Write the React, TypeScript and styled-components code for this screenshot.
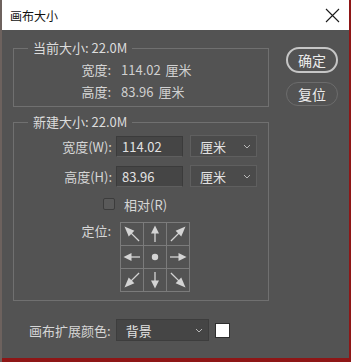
import React from 'react'
import styled, { createGlobalStyle } from 'styled-components'

const GlobalStyle = createGlobalStyle`
    html, body {
        margin: 0;
        padding: 0;
        width: 351px;
        height: 362px;
        overflow: hidden;
        background: linear-gradient(90deg, #6d625e 0 2px, #8e1616 2px);
        font-family: "Noto Sans CJK SC", "Noto Sans", sans-serif;
    }
`;

type Dir = 'nw' | 'n' | 'ne' | 'w' | 'c' | 'e' | 'sw' | 's' | 'se';

const angles: Record<Dir, number> = {
    n: 0, ne: 45, e: 90, se: 135, s: 180, sw: 225, w: 270, nw: 315, c: 0,
};

const Arrow = ({ dir }: { dir: Dir }) => {
    if (dir === 'c') {
        return (
            <svg width="22" height="22" viewBox="0 0 22 22">
                <circle cx="11" cy="11" r="3.2" fill="#d4d4d4" />
            </svg>
        );
    }
    const diag = angles[dir] % 90 !== 0;
    const len = diag ? 1.25 : 1;
    return (
        <svg width="22" height="22" viewBox="0 0 22 22">
            <g transform={`rotate(${angles[dir]} 11 11) translate(11 11) scale(1 ${len}) translate(-11 -11)`}>
                <line x1="11" y1="19" x2="11" y2="8" stroke="#d4d4d4" strokeWidth="1.3" />
                <polygon points="11,2.5 7,10.5 15,10.5" fill="#d4d4d4" />
            </g>
        </svg>
    );
};

const Chevron = () => (
    <svg width="8" height="5" viewBox="0 0 8 5">
        <path d="M1 1 L4 4 L7 1" fill="none" stroke="#b8b8b8" strokeWidth="1" />
    </svg>
);

const App = () => {
    const dirs: Dir[] = ['nw', 'n', 'ne', 'w', 'c', 'e', 'sw', 's', 'se'];
    return (
        <>
            <GlobalStyle />
            <Dialog>
                <TitleBar>
                    <Title>画布大小</Title>
                    <svg width="15" height="15" viewBox="0 0 15 15">
                        <path d="M1 1 L14 14 M14 1 L1 14" stroke="#1a1a1a" strokeWidth="1.1" />
                    </svg>
                </TitleBar>
                <Body>
                    <Groups>
                        <Group>
                            <Legend>当前大小: 22.0M</Legend>
                            <InfoRow>
                                <Label>宽度:</Label>
                                <Value>114.02 厘米</Value>
                            </InfoRow>
                            <InfoRow>
                                <Label>高度:</Label>
                                <Value>83.96 厘米</Value>
                            </InfoRow>
                        </Group>
                        <Group $second>
                            <Legend>新建大小: 22.0M</Legend>
                            <FieldRow>
                                <Label>宽度(W):</Label>
                                <Input>114.02</Input>
                                <Select $w={67}>厘米<Chevron /></Select>
                            </FieldRow>
                            <FieldRow>
                                <Label>高度(H):</Label>
                                <Input>83.96</Input>
                                <Select $w={67}>厘米<Chevron /></Select>
                            </FieldRow>
                            <CheckRow>
                                <Box />
                                <span>相对(R)</span>
                            </CheckRow>
                            <AnchorRow>
                                <Label>定位:</Label>
                                <AnchorGrid>
                                    {dirs.map(d => (
                                        <Cell key={d}><Arrow dir={d} /></Cell>
                                    ))}
                                </AnchorGrid>
                            </AnchorRow>
                        </Group>
                    </Groups>
                    <Buttons>
                        <Button $primary>确定</Button>
                        <Button>复位</Button>
                    </Buttons>
                </Body>
                <Footer>
                    <Label>画布扩展颜色:</Label>
                    <Select $w={93} $dark>背景<Chevron /></Select>
                    <Swatch />
                </Footer>
            </Dialog>
        </>
    );
}
export default App;

const Dialog = styled.div`
    margin-left: 2px;
    width: 347px;
    height: 358px;
    background: #535353;
    color: #d6d6d6;
    font-size: 13px;
    display: flex;
    flex-direction: column;
`;

const TitleBar = styled.div`
    height: 30px;
    background: #ffffff;
    display: flex;
    align-items: center;
    justify-content: space-between;
    padding: 0 9px 0 8px;
`;

const Title = styled.span`
    color: #111;
    font-size: 12px;
`;

const Body = styled.div`
    display: flex;
    padding: 9px 0 0 11px;
`;

const Groups = styled.div`
    display: flex;
    flex-direction: column;
    gap: 6px;
`;

interface GroupProps {
    $second?: boolean;
}
const Group = styled.fieldset<GroupProps>`
    margin: 0;
    width: 256px;
    box-sizing: border-box;
    border: 1px solid #707070;
    padding: ${({ $second }) => $second ? '4px 0 8px' : '1px 0 4px'};
    display: flex;
    flex-direction: column;
    gap: ${({ $second }) => $second ? '9px' : '0'};
`;

const Legend = styled.legend`
    margin-left: 14px;
    padding: 0 5px;
    line-height: 18px;
    font-size: 13px;
    color: #dcdcdc;
`;

const Label = styled.span`
    text-align: right;
    white-space: nowrap;
`;

const InfoRow = styled.div`
    display: grid;
    grid-template-columns: 97px auto;
    column-gap: 10px;
    height: 22px;
    align-items: center;
`;

const Value = styled.span`
    color: #d0d0d0;
    word-spacing: 2px;
`;

const FieldRow = styled.div`
    display: grid;
    grid-template-columns: 98px 67px 67px;
    column-gap: 4px;
    align-items: center;
    height: 21px;
    & > :last-child {
        margin-left: 3px;
    }
`;

const Input = styled.div`
    height: 21px;
    box-sizing: border-box;
    background: #454545;
    border: 1px solid #3b3b3b;
    border-bottom-color: #5e5e5e;
    padding: 0 5px;
    display: flex;
    align-items: center;
    color: #e2e2e2;
`;

interface SelectProps {
    $w: number;
    $dark?: boolean;
}
const Select = styled.div<SelectProps>`
    width: ${({ $w }) => $w}px;
    height: 22px;
    box-sizing: border-box;
    background: ${({ $dark }) => $dark ? '#454545' : '#4b4b4b'};
    border: 1px solid ${({ $dark }) => $dark ? '#3d3d3d' : '#5f5f5f'};
    display: flex;
    align-items: center;
    justify-content: space-between;
    padding: 0 5px 0 9px;
    color: #e2e2e2;
`;

const CheckRow = styled.div`
    display: flex;
    align-items: center;
    gap: 9px;
    height: 18px;
    padding-left: 89px;
`;

const Box = styled.div`
    width: 12px;
    height: 12px;
    box-sizing: border-box;
    border: 1px solid #3c3c3c;
    background: #5a5a5a;
    border-radius: 2px;
`;

const AnchorRow = styled.div`
    display: grid;
    grid-template-columns: 97px auto;
    column-gap: 9px;
    align-items: start;
    & > :first-child {
        margin-top: -1px;
    }
`;

const AnchorGrid = styled.div`
    display: grid;
    grid-template-columns: repeat(3, 22px);
    grid-auto-rows: 22px;
    gap: 1px;
    padding: 1px;
    background: #7b7b7b;
    width: max-content;
`;

const Cell = styled.div`
    background: #535353;
    display: flex;
`;

const Buttons = styled.div`
    display: flex;
    flex-direction: column;
    gap: 9px;
    margin: 8px 0 0 17px;
`;

interface ButtonProps {
    $primary?: boolean;
}
const Button = styled.div<ButtonProps>`
    width: 52px;
    height: ${({ $primary }) => $primary ? '26px' : '24px'};
    box-sizing: border-box;
    border-radius: 13px;
    border: ${({ $primary }) => $primary ? '2px solid #c6c6c6' : '1.5px solid #6c6c6c'};
    display: flex;
    align-items: center;
    justify-content: center;
    font-size: 14px;
    color: #ececec;
`;

const Footer = styled.div`
    display: flex;
    align-items: center;
    margin-top: 18px;
    padding-left: 27px;
    gap: 5px;
    & > :last-child {
        margin-left: 1px;
    }
`;

const Swatch = styled.div`
    width: 15px;
    height: 15px;
    box-sizing: border-box;
    background: #ffffff;
    border: 1px solid #2e2e2e;
`;
